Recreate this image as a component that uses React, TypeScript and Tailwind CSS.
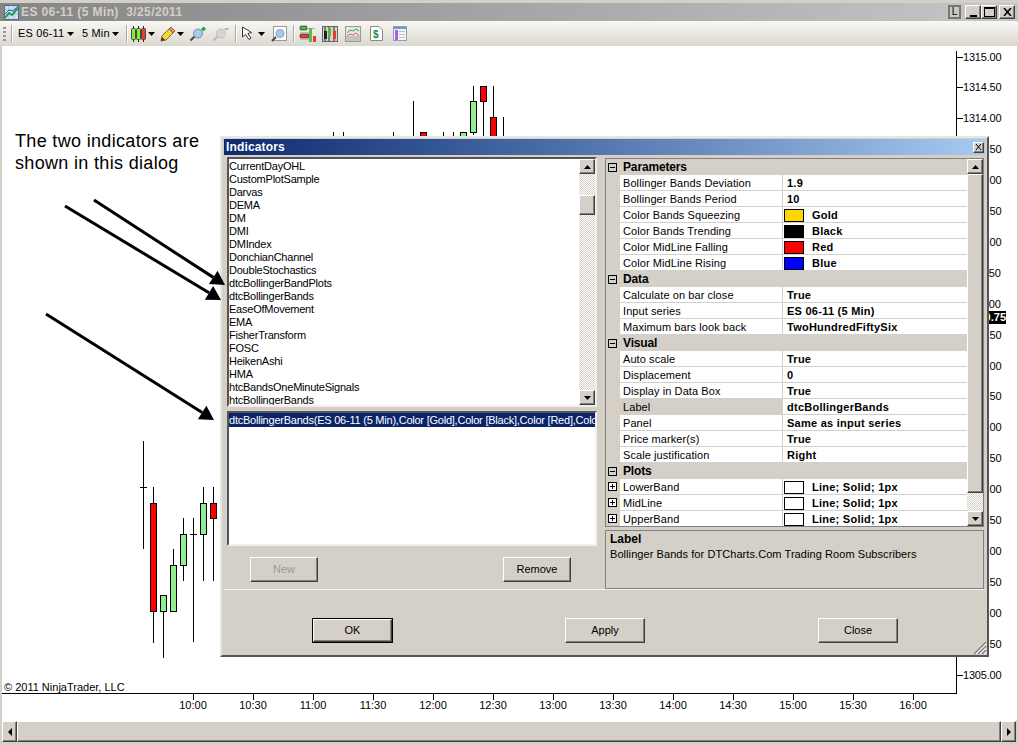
import React from "react";

const bevel = "border border-t-white border-l-white border-r-[#404040] border-b-[#404040] shadow-[inset_-1px_-1px_0_#808080] bg-[#d4d0c8]";
const dither = "bg-[repeating-conic-gradient(#d4d0c8_0_25%,#ffffff_0_50%)] bg-[length:2px_2px]";

const indicators = ["CurrentDayOHL","CustomPlotSample","Darvas","DEMA","DM","DMI","DMIndex","DonchianChannel","DoubleStochastics","dtcBollingerBandPlots","dtcBollingerBands","EaseOfMovement","EMA","FisherTransform","FOSC","HeikenAshi","HMA","htcBandsOneMinuteSignals","htcBollingerBands"];

type Row = { label: string; value: string; swatch?: string; plot?: boolean; selected?: boolean };
const sections: { title: string; rows: Row[] }[] = [
  { title: "Parameters", rows: [
    { label: "Bollinger Bands Deviation", value: "1.9" },
    { label: "Bollinger Bands Period", value: "10" },
    { label: "Color Bands Squeezing", value: "Gold", swatch: "#ffd700" },
    { label: "Color Bands Trending", value: "Black", swatch: "#000000" },
    { label: "Color MidLine Falling", value: "Red", swatch: "#ff0000" },
    { label: "Color MidLine Rising", value: "Blue", swatch: "#0000ff" },
  ]},
  { title: "Data", rows: [
    { label: "Calculate on bar close", value: "True" },
    { label: "Input series", value: "ES 06-11 (5 Min)" },
    { label: "Maximum bars look back", value: "TwoHundredFiftySix" },
  ]},
  { title: "Visual", rows: [
    { label: "Auto scale", value: "True" },
    { label: "Displacement", value: "0" },
    { label: "Display in Data Box", value: "True" },
    { label: "Label", value: "dtcBollingerBands", selected: true },
    { label: "Panel", value: "Same as input series" },
    { label: "Price marker(s)", value: "True" },
    { label: "Scale justification", value: "Right" },
  ]},
  { title: "Plots", rows: [
    { label: "LowerBand", value: "Line; Solid; 1px", swatch: "#ffffff", plot: true },
    { label: "MidLine", value: "Line; Solid; 1px", swatch: "#ffffff", plot: true },
    { label: "UpperBand", value: "Line; Solid; 1px", swatch: "#ffffff", plot: true },
  ]},
];

const Caret = ({ dir, className = "" }: { dir: "up" | "down" | "left" | "right"; className?: string }) => {
  const pts = { up: "0,4 7,4 3.5,0", down: "0,0 7,0 3.5,4", left: "4,0 4,8 0,4", right: "0,0 0,8 4,4" }[dir];
  const vertical = dir === "up" || dir === "down";
  return <svg width={vertical ? 7 : 4} height={vertical ? 4 : 8} className={`shrink-0 ${className}`}><polygon points={pts} fill="#000" /></svg>;
};

const ScrollBtn = ({ dir }: { dir: "up" | "down" }) => (
  <div className={`${bevel} h-[15px] w-[16px] shrink-0 flex items-center justify-center`}><Caret dir={dir} /></div>
);

const Expander = ({ open }: { open: boolean }) => (
  <svg width="9" height="9" className="shrink-0">
    <rect x="0.5" y="0.5" width="8" height="8" fill={open ? "none" : "#fff"} stroke="#000" />
    <line x1="2" y1="4.5" x2="7" y2="4.5" stroke="#000" />
    {!open && <line x1="4.5" y1="2" x2="4.5" y2="7" stroke="#000" />}
  </svg>
);

const Button = ({ children, w, disabled, def, cls = "" }: { children: React.ReactNode; w: string; disabled?: boolean; def?: boolean; cls?: string }) => (
  <div className={`${w} ${cls} h-[25px] flex items-center justify-center text-[11px] shrink-0 ${def ? "border border-black" : ""} ${disabled ? "text-[#9a9a94]" : "text-black"}`}>
    <div className={`${bevel} w-full h-full flex items-center justify-center`}>{children}</div>
  </div>
);

/* ---------- chart ---------- */
type C = { x: number; hi: number; lo: number; top?: number; bot?: number; color?: string; tick?: number };
const candles: C[] = [
  { x: 143.5, hi: 441, lo: 549, tick: 487 },
  { x: 153.5, hi: 487, lo: 643, top: 503, bot: 611, color: "#ff0000" },
  { x: 163.5, hi: 595, lo: 658, top: 595, bot: 611, color: "#90ee90" },
  { x: 173.5, hi: 549, lo: 611, top: 565, bot: 611, color: "#90ee90" },
  { x: 183.5, hi: 518, lo: 581, top: 534, bot: 565, color: "#90ee90" },
  { x: 193.5, hi: 518, lo: 642, tick: 534 },
  { x: 203.5, hi: 487, lo: 581, top: 503, bot: 534, color: "#90ee90" },
  { x: 213.5, hi: 487, lo: 581, top: 503, bot: 518, color: "#ff0000" },
  { x: 333.5, hi: 132, lo: 140 },
  { x: 343.5, hi: 132, lo: 140 },
  { x: 393.5, hi: 132, lo: 140 },
  { x: 413.5, hi: 101, lo: 140 },
  { x: 423.5, hi: 132, lo: 140, top: 132, bot: 145, color: "#ff0000" },
  { x: 443.5, hi: 132, lo: 140 },
  { x: 453.5, hi: 132, lo: 140 },
  { x: 463.5, hi: 132, lo: 140, top: 132, bot: 145, color: "#90ee90" },
  { x: 473.5, hi: 86, lo: 135, top: 101, bot: 132, color: "#90ee90" },
  { x: 483.5, hi: 86, lo: 140, top: 86, bot: 101, color: "#ff0000" },
  { x: 493.5, hi: 86, lo: 140, top: 117, bot: 145, color: "#ff0000" },
  { x: 503.5, hi: 117, lo: 140 },
];

const times = ["10:00","10:30","11:00","11:30","12:00","12:30","13:00","13:30","14:00","14:30","15:00","15:30","16:00"];
const prices = Array.from({ length: 21 }, (_, i) => ({ label: (1315 - i * 0.5).toFixed(2), y: 56.5 + i * 30.9 }));

const ChartLines = () => (
  <svg width="1018" height="745" className="absolute left-0 top-0">
    <line x1="956.5" y1="51" x2="956.5" y2="693" stroke="#000" />
    <line x1="2" y1="693.5" x2="957" y2="693.5" stroke="#000" />
    {times.map((t, i) => <line key={t} x1={193.5 + i * 60} y1="693" x2={193.5 + i * 60} y2="700" stroke="#000" />)}
    {prices.map((p) => <line key={p.label} x1="956" y1={Math.round(p.y) + 0.5} x2="963" y2={Math.round(p.y) + 0.5} stroke="#000" />)}
    {candles.map((c) => (
      <g key={c.x}>
        <line x1={c.x} y1={c.hi} x2={c.x} y2={c.lo} stroke="#000" />
        {c.tick && <line x1={c.x - 3.5} y1={c.tick + 0.5} x2={c.x + 3.5} y2={c.tick + 0.5} stroke="#000" />}
        {c.top !== undefined && <rect x={c.x - 3} y={c.top + 0.5} width="6" height={(c.bot as number) - c.top} fill={c.color} stroke="#000" />}
      </g>
    ))}
  </svg>
);

/* ---------- toolbar icons ---------- */
const CandleIcon = () => (
  <svg width="16" height="16" className="shrink-0">
    {[[0.5, "#86ee30"], [5.5, "#86ee30"], [10.5, "#f03a2c"]].map(([x, f], i) => (
      <g key={i}>
        <line x1={(x as number) + 2} y1="0" x2={(x as number) + 2} y2="16" stroke="#222" />
        <rect x={x as number} y="2.5" width="4" height="11" rx="1" fill={f as string} stroke="#444" />
      </g>
    ))}
  </svg>
);
const Pencil = () => (
  <svg width="16" height="16" className="shrink-0">
    <polygon points="1,15 2,10 11,1 15,5 6,14" fill="#f5d838" stroke="#8a6a20" />
    <polygon points="1,15 2,11 5,14" fill="#333" />
    <polygon points="11,1 15,5 13,7 9,3" fill="#e88a70" stroke="#8a6a20" />
  </svg>
);
const Magnifier = ({ gray, plus, minus }: { gray?: boolean; plus?: boolean; minus?: boolean }) => (
  <svg width="17" height="16" className="shrink-0">
    <line x1="1.5" y1="14.5" x2="6" y2="10" stroke={gray ? "#b8b8b4" : "#444"} strokeWidth="2" />
    <circle cx="9" cy="7.5" r="4.5" fill={gray ? "#d6d6d2" : "#a8c8ee"} stroke={gray ? "#c0c0bc" : "#7c8ea8"} />
    {plus && <path d="M12.5 3h4M14.5 1v4" stroke="#18a838" strokeWidth="2" />}
    {minus && <path d="M12.5 3h4" stroke="#b8b8b4" strokeWidth="2" />}
  </svg>
);
const Cursor = () => (
  <svg width="15" height="15" className="shrink-0">
    <polygon points="1.5,1 1.5,11 4.5,8.5 8,13.5 10,12 6.8,7.5 10.5,6.5" fill="#fff" stroke="#333" />
  </svg>
);
const ZoomBox = () => (
  <svg width="16" height="16" className="shrink-0">
    <rect x="2.5" y="0.5" width="13" height="14" fill="#fbfbf8" stroke="#999" />
    <line x1="1" y1="15" x2="5" y2="11" stroke="#444" strokeWidth="2" />
    <circle cx="9" cy="7.5" r="4" fill="#a8c8ee" stroke="#8aa0bc" />
  </svg>
);
const Ic1 = () => (
  <svg width="17" height="17" className="shrink-0">
    <rect x="1" y="1" width="7" height="4" rx="1" fill="#46b848" stroke="#222" strokeWidth=".6" />
    <rect x="8" y="3" width="8" height="1" fill="#aaa" />
    <rect x="1" y="9" width="9" height="4" rx="1" fill="#e83830" stroke="#222" strokeWidth=".6" />
    <rect x="10" y="3" width="3" height="14" fill="#56c040" />
    <rect x="14" y="11" width="3" height="6" fill="#e83830" />
    <rect x="1" y="7" width="9" height="1" fill="#bbb" />
    <rect x="1" y="14" width="9" height="1" fill="#bbb" />
  </svg>
);
const Ic2 = () => (
  <svg width="16" height="16" className="shrink-0">
    <rect x="0.5" y="0.5" width="15" height="15" fill="#d4d4ce" stroke="#666" />
    {[[3, "#222"], [7, "#46c040"], [12, "#e83830"]].map(([x, f], i) => (
      <g key={i}>
        <line x1={x as number} y1="1" x2={x as number} y2="15" stroke="#222" />
        <rect x={(x as number) - 1} y={i === 1 ? 2 : 5} width="3" height="8" fill={f as string} />
      </g>
    ))}
  </svg>
);
const Ic3 = () => (
  <svg width="16" height="16" className="shrink-0">
    <rect x="0.5" y="0.5" width="15" height="15" fill="#e6e6e0" stroke="#999" />
    <rect x="1" y="10" width="14" height="5" fill="#c4c4be" />
    <polyline points="2,7 5,4 8,5 11,3 14,5" fill="none" stroke="#3aa860" />
    <polyline points="2,10 5,8 8,9 11,7 14,10" fill="none" stroke="#e05850" />
  </svg>
);
const Ic4 = () => (
  <svg width="13" height="15" className="shrink-0">
    <polygon points="0.5,0.5 9,0.5 12.5,4 12.5,14.5 0.5,14.5" fill="#fff" stroke="#888" />
    <text x="3" y="12" fontSize="10" fontWeight="700" fill="#109038" fontFamily="Liberation Sans, sans-serif">$</text>
  </svg>
);
const Ic5 = () => (
  <svg width="14" height="15" className="shrink-0">
    <rect x="0.5" y="0.5" width="13" height="14" fill="#f4f4f0" stroke="#8aa0b8" />
    <rect x="1" y="1" width="12" height="2" fill="#6a9cc8" />
    <rect x="2" y="4" width="3" height="10" fill="#a860e8" />
    {[5, 8, 11].map((y) => <rect key={y} x="6" y={y} width="6" height="1" fill="#b8c0c8" />)}
  </svg>
);
const Sep = ({ cls }: { cls: string }) => <div className={`${cls} w-[2px] h-[17px] border-l border-[#a8a8a4] bg-white shrink-0`} />;

const Arrow = ({ x1, y1, x2, y2 }: { x1: number; y1: number; x2: number; y2: number }) => {
  const a = Math.atan2(y2 - y1, x2 - x1);
  const L = 14, W = 8;
  const bx = x2 - L * Math.cos(a), by = y2 - L * Math.sin(a);
  const px = -Math.sin(a) * W, py = Math.cos(a) * W;
  return (
    <g>
      <line x1={x1} y1={y1} x2={bx} y2={by} stroke="#000" strokeWidth="3" />
      <polygon points={`${x2},${y2} ${bx + px},${by + py} ${bx - px},${by - py}`} fill="#000" />
    </g>
  );
};

const WinBtn = ({ children, cls = "" }: { children: React.ReactNode; cls?: string }) => (
  <div className={`${bevel} ${cls} w-[16px] h-[14px] flex items-center justify-center shrink-0`}>{children}</div>
);

export default function App() {
  return (
    <div className="relative w-[1018px] h-[745px] overflow-hidden bg-[#d4d0c8] flex flex-col pt-[3px] font-['Liberation_Sans',Arial,sans-serif] text-[11px] text-black">
      {/* title bar */}
      <div className="h-[18px] shrink-0 flex items-center bg-gradient-to-r from-[#868686] to-[#c6c6c6] pl-[4px] pr-[3px]">
        <svg width="15" height="15" className="shrink-0">
          <rect x="0.5" y="0.5" width="14" height="14" fill="#cfe0f4" stroke="#5a6a80" />
          <path d="M1 5h13M1 9h13M5 1v13M10 1v13" stroke="#9ab0c8" strokeWidth=".6" />
          <polyline points="1,13 5,8 8,10 14,3" fill="none" stroke="#20a040" strokeWidth="2" />
          <polyline points="1,9 5,5 9,6 14,1" fill="none" stroke="#2860d8" />
        </svg>
        <span className="ml-[2px] font-bold text-[12px] tracking-[0.4px] text-[#d4d0c8] whitespace-pre">ES 06-11 (5 Min)  3/25/2011</span>
        <div className="ml-auto flex items-center">
          <div className="w-[13px] h-[14px] border-2 border-[#777] bg-[#c8c8c4] flex items-center justify-center text-[10px] leading-none mr-[4px]">L</div>
          <WinBtn><span className="w-[7px] h-[2px] bg-black mt-[7px]" /></WinBtn>
          <WinBtn><span className="w-[11px] h-[10px] border border-black border-t-2" /></WinBtn>
          <WinBtn cls="ml-[2px]"><svg width="9" height="8"><path d="M1 0l7 8M8 0L1 8" stroke="#000" strokeWidth="1.6" /></svg></WinBtn>
        </div>
      </div>

      {/* toolbar */}
      <div className="h-[25px] shrink-0 flex items-center bg-gradient-to-b from-[#f8f7f4] to-[#dbd8cf] rounded-r-[2px] text-[11px] tracking-[0.15px] whitespace-nowrap">
        <div className="ml-[3px] w-[3px] h-[14px] shrink-0 bg-[repeating-linear-gradient(to_bottom,#999_0_2px,transparent_2px_4px)]" />
        <Sep cls="ml-[5px]" />
        <span className="ml-[5px] w-[45px] shrink-0">ES 06-11</span>
        <Caret dir="down" className="ml-[4px]" />
        <span className="ml-[8px] w-[27px] shrink-0">5 Min</span>
        <Caret dir="down" className="ml-[3px]" />
        <Sep cls="ml-[7px]" />
        <div className="ml-[3px]"><CandleIcon /></div>
        <Caret dir="down" className="ml-[1px]" />
        <div className="ml-[5px]"><Pencil /></div>
        <Caret dir="down" className="ml-[1px]" />
        <div className="ml-[5px]"><Magnifier plus /></div>
        <div className="ml-[6px]"><Magnifier gray minus /></div>
        <Sep cls="ml-[6px]" />
        <div className="ml-[4px]"><Cursor /></div>
        <Caret dir="down" className="ml-[2px]" />
        <div className="ml-[6px]"><ZoomBox /></div>
        <Sep cls="ml-[6px]" />
        <div className="ml-[4px]"><Ic1 /></div>
        <div className="ml-[6px]"><Ic2 /></div>
        <div className="ml-[7px]"><Ic3 /></div>
        <div className="ml-[9px]"><Ic4 /></div>
        <div className="ml-[10px]"><Ic5 /></div>
      </div>

      {/* chart area */}
      <div className="flex-1 bg-white ml-[2px] mr-px" />

      {/* horizontal scrollbar */}
      <div className="h-[22px] shrink-0 mb-[3px] mx-[2px] flex border-t border-white bg-[#d4d0c8]">
        <div className={`${bevel} w-[15px] flex items-center justify-center shrink-0`}><Caret dir="left" /></div>
        <div className={`${bevel} flex-1`} />
        <div className={`${bevel} w-[15px] flex items-center justify-center shrink-0`}><Caret dir="right" /></div>
      </div>

      {/* chart canvas */}
      <ChartLines />
      {prices.map((p) => (
        <span key={p.label} className="absolute left-[963px] leading-[14px] tracking-[-0.2px]" style={{ top: p.y - 7 }}>{p.label}</span>
      ))}
      <span className="absolute left-[964px] top-[311px] w-[42px] h-[13px] bg-black text-white font-bold leading-[13px] text-right">1310.75</span>
      {times.map((t, i) => (
        <span key={t} className="absolute top-[698px] w-[40px] text-center leading-[14px]" style={{ left: 173 + i * 60 }}>{t}</span>
      ))}
      <span className="absolute left-[4px] top-[680px] leading-[14px]">© 2011 NinjaTrader, LLC</span>
      <div className="absolute left-[15px] top-[130px] text-[18px] tracking-[0.33px] leading-[22px] text-black">The two indicators are<br />shown in this dialog</div>

      {/* dialog */}
      <div className="absolute left-[220px] top-[136px] w-[769px] h-[521px] bg-[#d4d0c8] border-2 border-t-[#e8e6e0] border-l-[#e8e6e0] border-r-[#555] border-b-[#555] pt-px px-[2px] flex flex-col">
        <div className="h-[16px] shrink-0 flex items-center justify-between bg-gradient-to-r from-[#0f2a70] to-[#a6caf0] pl-[2px] pr-px">
          <span className="font-bold text-[12px] tracking-[0.15px] text-white">Indicators</span>
          <div className={`${bevel} w-[11px] h-[11px] flex items-center justify-center`}>
            <svg width="7" height="6"><path d="M1 0l5 6M6 0L1 6" stroke="#000" /></svg>
          </div>
        </div>

        <div className="h-[435px] shrink-0 flex pt-[2px] border-b border-[#f4f3ef]">
          {/* left column */}
          <div className="ml-[3px] w-[370px] flex flex-col shrink-0 tracking-[-0.23px]">
            <div className="h-[250px] shrink-0 flex border-2 border-t-[#555] border-l-[#555] border-r-[#f0efea] border-b-[#f0efea] bg-white">
              <div className="flex-1 pt-px overflow-hidden">
                {indicators.map((n) => <div key={n} className="h-[13px] leading-[13px] whitespace-nowrap">{n}</div>)}
              </div>
              <div className="w-[16px] shrink-0 flex flex-col">
                <ScrollBtn dir="up" />
                <div className={`${dither} h-[21px] shrink-0`} />
                <div className={`${bevel} h-[20px] shrink-0`} />
                <div className={`${dither} flex-1`} />
                <ScrollBtn dir="down" />
              </div>
            </div>
            <div className="mt-[4px] h-[135px] shrink-0 border-2 border-t-[#555] border-l-[#555] border-r-[#f0efea] border-b-[#f0efea] bg-white overflow-hidden">
              <div className="h-[14px] bg-[#0a246a] text-white leading-[14px] whitespace-nowrap overflow-hidden">dtcBollingerBands(ES 06-11 (5 Min),Color [Gold],Color [Black],Color [Red],Color</div>
            </div>
            <div className="flex mt-[11px] pl-[23px] tracking-normal">
              <Button w="w-[68px]" disabled>New</Button>
              <Button w="w-[68px]" cls="ml-[185px]">Remove</Button>
            </div>
          </div>

          {/* right column */}
          <div className="ml-[8px] w-[379px] flex flex-col shrink-0">
            <div className="h-[369px] mt-px shrink-0 border border-[#808080] flex overflow-hidden bg-[#d4d0c8]">
              <div className="flex-1 overflow-hidden">
                {sections.map((s) => (
                  <div key={s.title}>
                    <div className="h-[16px] flex items-center font-bold text-[12px] tracking-[-0.15px]">
                      <div className="w-[14px] pl-[2px] flex items-center shrink-0"><Expander open /></div>
                      <span className="pl-[3px]">{s.title}</span>
                    </div>
                    {s.rows.map((r) => (
                      <div key={r.label} className="h-[16px] flex border-b border-[#d4d0c8]">
                        <div className="w-[14px] pl-[2px] flex items-center shrink-0">{r.plot && <Expander open={false} />}</div>
                        <div className={`w-[163px] pl-[3px] leading-[16px] tracking-[0.08px] border-r border-[#d4d0c8] shrink-0 ${r.selected ? "bg-[#d4d0c8]" : "bg-white"}`}>{r.label}</div>
                        <div className="flex-1 bg-white flex items-center pl-px pt-px font-bold tracking-[0.25px]">
                          {r.swatch
                            ? <><span className="w-[20px] h-[13px] border border-black shrink-0" style={{ background: r.swatch }} /><span className="ml-[8px]">{r.value}</span></>
                            : <span className="pl-[3px]">{r.value}</span>}
                        </div>
                      </div>
                    ))}
                  </div>
                ))}
              </div>
              <div className="w-[16px] shrink-0 flex flex-col">
                <ScrollBtn dir="up" />
                <div className={`${bevel} h-[319px] shrink-0`} />
                <div className={`${dither} flex-1`} />
                <ScrollBtn dir="down" />
              </div>
            </div>
            <div className="mt-[3px] h-[59px] shrink-0 border border-[#808080] pl-[4px] pt-px">
              <div className="font-bold text-[12px] leading-[15px]">Label</div>
              <div className="leading-[15px] tracking-[0.07px]">Bollinger Bands for DTCharts.Com Trading Room Subscribers</div>
            </div>
          </div>
        </div>

        {/* footer */}
        <div className="flex pt-[28px] pl-[88px]">
          <Button w="w-[81px]" def>OK</Button>
          <Button w="w-[80px]" cls="ml-[172px]">Apply</Button>
          <Button w="w-[80px]" cls="ml-[173px]">Close</Button>
        </div>

        <svg width="15" height="15" className="absolute right-0 bottom-0">
          <path d="M14 2L2 14M14 6L6 14M14 10L10 14" stroke="#808080" strokeWidth="1.3" />
          <path d="M14 4L4 14M14 8L8 14M14 12L12 14" stroke="#fff" />
        </svg>
      </div>

      {/* annotation arrows */}
      <svg width="240" height="240" className="absolute left-0 top-[190px] pointer-events-none">
        <Arrow x1={94} y1={10} x2={225} y2={95} />
        <Arrow x1={65} y1={16} x2={221} y2={110} />
        <Arrow x1={46} y1={124} x2={214} y2={230} />
      </svg>
    </div>
  );
}
